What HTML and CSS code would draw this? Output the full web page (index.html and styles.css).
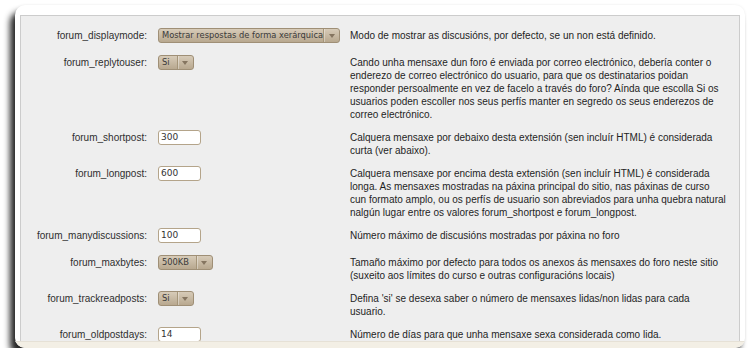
FILE: index.html
```html
<!DOCTYPE html>
<html lang="gl">
<head>
    <meta charset="UTF-8">
    <title>Configuración do foro</title>
    <link rel="stylesheet" href="styles.css">
</head>
<body>
    <div class="page">
        <div class="content">
            <div class="settings">
                <div class="row">
                    <div class="label">forum_displaymode:</div>
                    <div class="field">
                        <span class="select select-wide"><span class="select-text">Mostrar respostas de forma xerárquica</span><span class="select-arrow"></span></span>
                    </div>
                    <div class="desc">Modo de mostrar as discusións, por defecto, se un non está definido.</div>
                </div>
                <div class="row">
                    <div class="label">forum_replytouser:</div>
                    <div class="field">
                        <span class="select"><span class="select-text">Si</span><span class="select-arrow"></span></span>
                    </div>
                    <div class="desc">Cando unha mensaxe dun foro é enviada por correo electrónico, debería conter o<br>enderezo de correo electrónico do usuario, para que os destinatarios poidan<br>responder persoalmente en vez de facelo a través do foro? Aínda que escolla Si os<br>usuarios poden escoller nos seus perfís manter en segredo os seus enderezos de<br>correo electrónico.</div>
                </div>
                <div class="row">
                    <div class="label">forum_shortpost:</div>
                    <div class="field"><span class="input">300</span></div>
                    <div class="desc">Calquera mensaxe por debaixo desta extensión (sen incluír HTML) é considerada<br>curta (ver abaixo).</div>
                </div>
                <div class="row">
                    <div class="label">forum_longpost:</div>
                    <div class="field"><span class="input">600</span></div>
                    <div class="desc">Calquera mensaxe por encima desta extensión (sen incluír HTML) é considerada<br>longa. As mensaxes mostradas na páxina principal do sitio, nas páxinas de curso<br>cun formato amplo, ou os perfís de usuario son abreviados para unha quebra natural<br>nalgún lugar entre os valores forum_shortpost e forum_longpost.</div>
                </div>
                <div class="row">
                    <div class="label">forum_manydiscussions:</div>
                    <div class="field"><span class="input">100</span></div>
                    <div class="desc">Número máximo de discusións mostradas por páxina no foro</div>
                </div>
                <div class="row">
                    <div class="label">forum_maxbytes:</div>
                    <div class="field">
                        <span class="select"><span class="select-text">500KB</span><span class="select-arrow"></span></span>
                    </div>
                    <div class="desc">Tamaño máximo por defecto para todos os anexos ás mensaxes do foro neste sitio<br>(suxeito aos límites do curso e outras configuracións locais)</div>
                </div>
                <div class="row">
                    <div class="label">forum_trackreadposts:</div>
                    <div class="field">
                        <span class="select"><span class="select-text">Si</span><span class="select-arrow"></span></span>
                    </div>
                    <div class="desc">Defina 'si' se desexa saber o número de mensaxes lidas/non lidas para cada<br>usuario.</div>
                </div>
                <div class="row">
                    <div class="label">forum_oldpostdays:</div>
                    <div class="field"><span class="input">14</span></div>
                    <div class="desc">Número de días para que unha mensaxe sexa considerada como lida.</div>
                </div>
            </div>
        </div>
        <div class="footer"></div>
    </div>
</body>
</html>
```

FILE: styles.css
```css
body, html {
    margin: 0;
    background-color: #ffffff;
    font-family: "Liberation Sans", Arial, sans-serif;
}
.page {
    width: 730px;
    margin: 5px 0 0 15px;
    background-color: #ffffff;
    border-radius: 10px;
    overflow: hidden;
    box-shadow: -5px 7px 6px rgba(0, 0, 0, 0.85), 0 0 3px rgba(0, 0, 0, 0.08);
}
.content {
    padding: 10px 5px 0 5px;
}
.settings {
    height: 326px;
    box-sizing: border-box;
    overflow: hidden;
    padding-top: 6px;
    background-color: #eeeeee;
    border: 1px solid #cccccc;
    border-bottom: none;
}
.row {
    display: grid;
    grid-template-columns: 126px 181px 1fr;
    column-gap: 11px;
    align-items: start;
    padding: 7px 0 3px;
    min-height: 27px;
    box-sizing: border-box;
    font-size: 10px;
    line-height: 13px;
}
.label {
    text-align: right;
    color: #2e2e2e;
}
.desc {
    color: #1e1e1e;
    white-space: nowrap;
}
.field {
    margin-top: -1px;
    height: 15px;
}
.select {
    display: inline-flex;
    height: 15px;
    box-sizing: border-box;
    border: 1px solid #9f8f76;
    border-radius: 3px;
    background: linear-gradient(#d7cbb8, #b8a88f);
    font-family: "DejaVu Sans", sans-serif;
    font-size: 8.3px;
    line-height: 13px;
    color: #3a3a3a;
}
.select-wide {
    width: 182px;
}
.select-text {
    flex: 1;
    padding: 0 7px 0 3px;
    white-space: nowrap;
    overflow: hidden;
}
.select-arrow {
    width: 15px;
    border-left: 1px solid #a59579;
    box-shadow: inset 1px 0 0 rgba(255, 255, 255, 0.35);
    display: flex;
    align-items: center;
    justify-content: center;
}
.select-arrow::after {
    content: '';
    border-left: 3px solid transparent;
    border-right: 3px solid transparent;
    border-top: 4px solid #857560;
}
.input {
    display: block;
    width: 43px;
    height: 15px;
    box-sizing: border-box;
    background-color: #ffffff;
    border: 1px solid #b4a48a;
    border-radius: 3px;
    padding-left: 2px;
    font-family: "DejaVu Sans", sans-serif;
    font-size: 9px;
    line-height: 13px;
    color: #333333;
}
.footer {
    height: 6px;
    background-color: #f3efe5;
    border-top: 1px solid #e6e1d6;
}
```
